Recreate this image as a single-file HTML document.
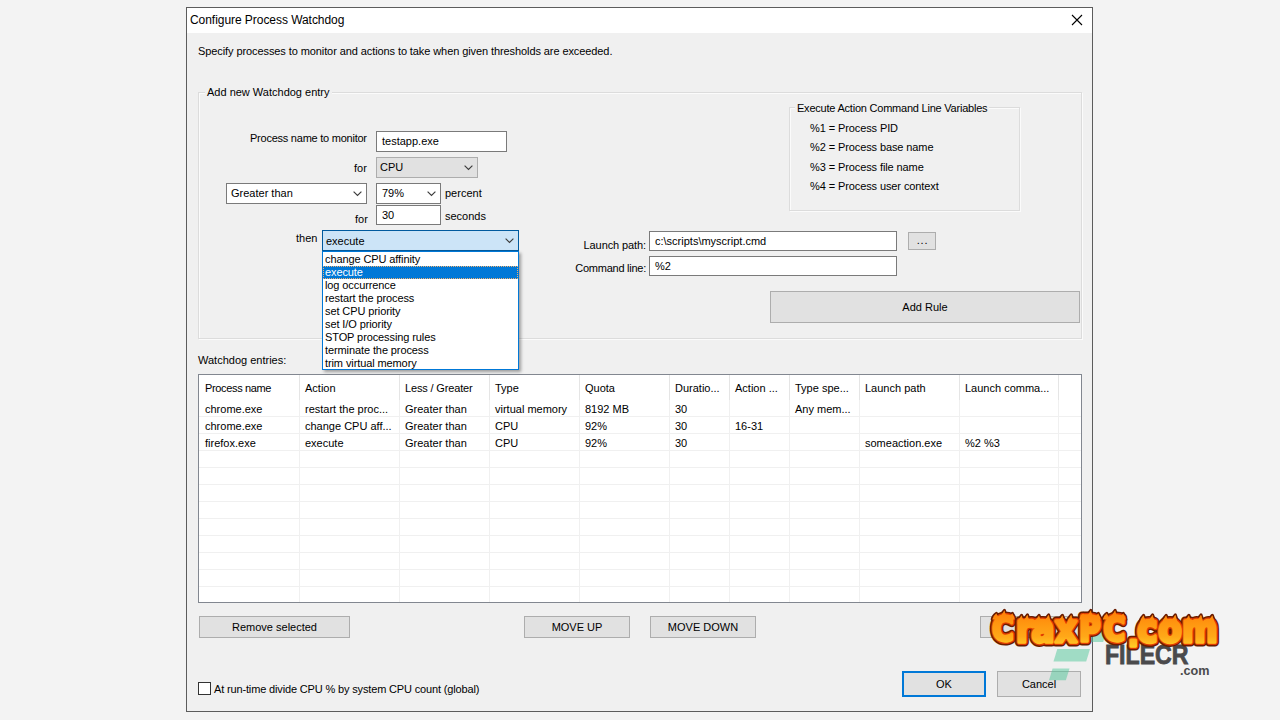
<!DOCTYPE html>
<html>
<head>
<meta charset="utf-8">
<title>Configure Process Watchdog</title>
<style>
*{box-sizing:border-box;margin:0;padding:0}
html,body{width:1280px;height:720px;overflow:hidden;background:#f3f3f3}
body{font-family:"Liberation Sans",sans-serif;font-size:11px;color:#000;position:relative}
.abs{position:absolute}
.t{position:absolute;white-space:nowrap;line-height:14px;height:14px}
#dlg{position:absolute;left:186px;top:7px;width:907px;height:705px;border:1px solid #5c5c5c;background:#f0f0f0}
#title{position:absolute;left:187px;top:8px;width:905px;height:25px;background:#fff}
.grp{position:absolute;border:1px solid #dcdcdc;box-shadow:inset 1px 1px 0 #fbfbfb, 1px 1px 0 #fbfbfb}
.grp>span{position:absolute;background:#f0f0f0;white-space:nowrap;line-height:14px;padding:0 2px}
.inp{position:absolute;background:#fff;border:1px solid #7a7a7a;line-height:18px;padding-left:5px;white-space:nowrap;overflow:hidden}
.cmb{position:absolute;background:#fff;border:1px solid #7a7a7a;line-height:19px;padding-left:4px;white-space:nowrap}
.cmb svg{position:absolute;right:4px;top:7px}
.btn{position:absolute;background:#e1e1e1;border:1px solid #adadad;text-align:center;white-space:nowrap}
#list{position:absolute;left:322px;top:251px;width:197px;height:119px;background:#fff;border:1px solid #0078d7;box-shadow:2px 2px 3px rgba(0,0,0,.35)}
#list{padding-top:1px}
#list div{height:13px;line-height:13px;padding-left:2px;white-space:nowrap;letter-spacing:-.1px}
#list div.sel{background:#0078d7;color:#fff;outline:1px dotted #f0b070;outline-offset:-1px}
#tbl{position:absolute;left:198px;top:374px;width:884px;height:229px;background:#fff;border:1px solid #828790;overflow:hidden}
#tbl .v{position:absolute;top:0;width:1px;height:227px;background:#f0f0f0}
#tbl .vh{position:absolute;top:0;width:1px;height:25px;background:#e5e5e5}
#tbl .h{position:absolute;left:0;width:882px;height:1px;background:#f0f0f0}
#tbl span{position:absolute;white-space:nowrap;line-height:14px;height:14px}
</style>
</head>
<body>
<div id="dlg"></div>
<div id="title"></div>
<div class="t" style="left:190px;top:13px;font-size:12px;letter-spacing:-.05px">Configure Process Watchdog</div>
<svg class="abs" style="left:1071px;top:14px" width="12" height="12" viewBox="0 0 12 12"><path d="M1 1 L11 11 M11 1 L1 11" stroke="#000" stroke-width="1.1" fill="none"/></svg>

<div class="t" style="left:198px;top:44px;letter-spacing:-.09px">Specify processes to monitor and actions to take when given thresholds are exceeded.</div>

<!-- outer group -->
<div class="grp" style="left:198px;top:92px;width:884px;height:247px"><span style="left:6px;top:-8px">Add new Watchdog entry</span></div>
<!-- inner group -->
<div class="grp" style="left:789px;top:107px;width:231px;height:104px"><span style="left:5px;top:-7px;letter-spacing:-.22px">Execute Action Command Line Variables</span></div>
<div class="t" style="left:810px;top:121px;letter-spacing:-.1px">%1 = Process PID</div>
<div class="t" style="left:810px;top:140px;letter-spacing:-.1px">%2 = Process base name</div>
<div class="t" style="left:810px;top:160px;letter-spacing:-.1px">%3 = Process file name</div>
<div class="t" style="left:810px;top:179px;letter-spacing:-.1px">%4 = Process user context</div>

<div class="t" style="left:250px;top:131px;letter-spacing:-.24px">Process name to monitor</div>
<div class="inp" style="left:376px;top:131px;width:131px;height:21px">testapp.exe</div>

<div class="t" style="left:354px;top:161px">for</div>
<div class="cmb" style="left:376px;top:157px;width:102px;height:21px;background:#e1e1e1;border-color:#adadad;line-height:19px;padding-left:3px">CPU<svg width="9" height="6" viewBox="0 0 9 6"><path d="M.6 .6 L4.5 4.5 L8.4 .6" stroke="#3c3c3c" stroke-width="1.15" fill="none"/></svg></div>

<div class="cmb" style="left:226px;top:183px;width:141px;height:21px">Greater than<svg width="9" height="6" viewBox="0 0 9 6"><path d="M.6 .6 L4.5 4.5 L8.4 .6" stroke="#3c3c3c" stroke-width="1.15" fill="none"/></svg></div>
<div class="cmb" style="left:376px;top:183px;width:65px;height:21px;padding-left:5px">79%<svg width="9" height="6" viewBox="0 0 9 6"><path d="M.6 .6 L4.5 4.5 L8.4 .6" stroke="#3c3c3c" stroke-width="1.15" fill="none"/></svg></div>
<div class="t" style="left:445px;top:186px">percent</div>

<div class="t" style="left:355px;top:212px">for</div>
<div class="inp" style="left:376px;top:205px;width:65px;height:20px;line-height:18px">30</div>
<div class="t" style="left:445px;top:209px">seconds</div>

<div class="t" style="left:296px;top:231px">then</div>
<div class="cmb" style="left:322px;top:230px;width:197px;height:21px;background:#cce4f7;border-color:#005a9e;padding-left:3px;line-height:21px">execute<svg width="9" height="6" viewBox="0 0 9 6"><path d="M.6 .6 L4.5 4.5 L8.4 .6" stroke="#3c3c3c" stroke-width="1.15" fill="none"/></svg></div>

<div class="t" style="left:546px;width:100px;text-align:right;top:238px;letter-spacing:-.1px">Launch path:</div>
<div class="inp" style="left:649px;top:231px;width:248px;height:20px;line-height:19px">c:\scripts\myscript.cmd</div>
<div class="btn" style="left:908px;top:232px;width:28px;height:18px;line-height:15px;letter-spacing:.8px;padding-left:1px">...</div>
<div class="t" style="left:546px;width:100px;text-align:right;top:261px;letter-spacing:-.25px">Command line:</div>
<div class="inp" style="left:649px;top:256px;width:248px;height:20px;line-height:19px">%2</div>

<div class="btn" style="left:770px;top:291px;width:310px;height:32px;line-height:30px">Add Rule</div>

<div class="t" style="left:198px;top:353px">Watchdog entries:</div>

<!-- table -->
<div id="tbl">
<div class="h" style="top:41px"></div><div class="h" style="top:58px"></div><div class="h" style="top:75px"></div><div class="h" style="top:92px"></div><div class="h" style="top:109px"></div><div class="h" style="top:126px"></div><div class="h" style="top:143px"></div><div class="h" style="top:160px"></div><div class="h" style="top:177px"></div><div class="h" style="top:194px"></div><div class="h" style="top:211px"></div>
<div class="v" style="left:100px"></div><div class="v" style="left:200px"></div><div class="v" style="left:290px"></div><div class="v" style="left:380px"></div><div class="v" style="left:470px"></div><div class="v" style="left:530px"></div><div class="v" style="left:590px"></div><div class="v" style="left:660px"></div><div class="v" style="left:760px"></div><div class="v" style="left:859px"></div>
<div class="vh" style="left:100px"></div><div class="vh" style="left:200px"></div><div class="vh" style="left:290px"></div><div class="vh" style="left:380px"></div><div class="vh" style="left:470px"></div><div class="vh" style="left:530px"></div><div class="vh" style="left:590px"></div><div class="vh" style="left:660px"></div><div class="vh" style="left:760px"></div><div class="vh" style="left:859px"></div>
<span style="left:6px;top:6px;letter-spacing:-.35px">Process name</span> <span style="left:106px;top:6px">Action</span> <span style="left:206px;top:6px;letter-spacing:-.15px">Less / Greater</span> <span style="left:296px;top:6px">Type</span> <span style="left:386px;top:6px">Quota</span> <span style="left:476px;top:6px">Duratio...</span> <span style="left:536px;top:6px">Action ...</span> <span style="left:596px;top:6px">Type spe...</span> <span style="left:666px;top:6px">Launch path</span> <span style="left:766px;top:6px">Launch comma...</span>
<span style="left:6px;top:27px">chrome.exe</span> <span style="left:106px;top:27px">restart the proc...</span> <span style="left:206px;top:27px">Greater than</span> <span style="left:296px;top:27px">virtual memory</span> <span style="left:386px;top:27px">8192 MB</span> <span style="left:476px;top:27px">30</span> <span style="left:596px;top:27px">Any mem...</span>
<span style="left:6px;top:44px">chrome.exe</span> <span style="left:106px;top:44px">change CPU aff...</span> <span style="left:206px;top:44px">Greater than</span> <span style="left:296px;top:44px">CPU</span> <span style="left:386px;top:44px">92%</span> <span style="left:476px;top:44px">30</span> <span style="left:536px;top:44px">16-31</span>
<span style="left:6px;top:61px">firefox.exe</span> <span style="left:106px;top:61px">execute</span> <span style="left:206px;top:61px">Greater than</span> <span style="left:296px;top:61px">CPU</span> <span style="left:386px;top:61px">92%</span> <span style="left:476px;top:61px">30</span> <span style="left:666px;top:61px">someaction.exe</span> <span style="left:766px;top:61px">%2 %3</span>
</div>

<!-- dropdown list -->
<div id="list">
<div>change CPU affinity</div>
<div class="sel">execute</div>
<div>log occurrence</div>
<div>restart the process</div>
<div>set CPU priority</div>
<div>set I/O priority</div>
<div>STOP processing rules</div>
<div>terminate the process</div>
<div>trim virtual memory</div>
</div>

<!-- bottom buttons -->
<div class="btn" style="left:199px;top:616px;width:151px;height:22px;line-height:20px">Remove selected</div>
<div class="btn" style="left:524px;top:616px;width:106px;height:22px;line-height:20px">MOVE UP</div>
<div class="btn" style="left:650px;top:616px;width:106px;height:22px;line-height:20px">MOVE DOWN</div>
<div class="btn" style="left:980px;top:616px;width:101px;height:22px;line-height:20px"></div>

<div class="abs" style="left:198px;top:682px;width:13px;height:13px;background:#fff;border:1px solid #333"></div>
<div class="t" style="left:214px;top:682px;letter-spacing:-.15px">At run-time divide CPU % by system CPU count (global)</div>

<div class="btn" style="left:902px;top:671px;width:84px;height:26px;line-height:22px;border:2px solid #0078d7">OK</div>
<div class="btn" style="left:997px;top:671px;width:84px;height:26px;line-height:24px">Cancel</div>
<!-- watermark -->
<svg class="abs" style="left:1040px;top:620px" width="80" height="70" viewBox="1040 620 80 70">
<polygon points="1088,631 1106.5,631 1103.2,642 1085,642" fill="#4fc79a" fill-opacity=".5"/>
<polygon points="1057.3,649 1090,649 1086.2,661.5 1053.5,661.5" fill="#4fc79a" fill-opacity=".5"/>
<polygon points="1052.6,668.5 1069.5,668.5 1065.9,680.3 1049,680.3" fill="#4fc79a" fill-opacity=".5"/>
</svg>
<svg class="abs" style="left:1100px;top:636px" width="120" height="46" viewBox="1100 636 120 46" font-family="'Liberation Sans',sans-serif" font-weight="bold">
<text x="1105" y="663.5" font-size="28" fill="#4a4a4c" stroke="#4a4a4c" stroke-width="0.9" textLength="83.5" lengthAdjust="spacingAndGlyphs">FILECR</text>
<text x="1180" y="675" font-size="13" fill="#4a4a4c" textLength="29.5" lengthAdjust="spacingAndGlyphs">.com</text>
</svg>
<svg class="abs" style="left:980px;top:600px" width="250" height="56" viewBox="980 600 250 56">
<defs>
<linearGradient id="fire" x1="0" y1="610" x2="0" y2="648" gradientUnits="userSpaceOnUse">
<stop offset="0" stop-color="#ff7c08"/><stop offset=".35" stop-color="#ff9610"/><stop offset=".7" stop-color="#ffa818"/><stop offset="1" stop-color="#ffd028"/>
</linearGradient>
</defs>
<path d="M992.3,619.5 Q992.8,616.2 996.4,613.5 Q998.3,616.8 998.8,619.5 ZM1000.3,619.5 Q1000.8,614.5 1004.4,610.5 Q1006.3,615.5 1006.8,619.5 ZM1008.3,619.5 Q1008.8,616.2 1012.4,613.5 Q1014.3,616.8 1014.8,619.5 ZM1017.5,623.5 Q1018.0,619.1 1021.6,615.5 Q1023.5,619.9 1024.0,623.5 ZM1023.4,623.5 Q1023.9,618.8 1027.4,615.0 Q1029.4,619.7 1029.9,623.5 ZM1035.0,623.5 Q1035.5,619.1 1039.0,615.5 Q1041.0,619.9 1041.5,623.5 ZM1044.5,623.5 Q1045.0,618.8 1048.6,615.0 Q1050.5,619.7 1051.0,623.5 ZM1058.3,623.5 Q1058.8,619.1 1062.4,615.5 Q1064.3,619.9 1064.8,623.5 ZM1067.2,623.5 Q1067.7,618.8 1071.2,615.0 Q1073.2,619.7 1073.7,623.5 ZM1079.2,619.5 Q1079.8,616.2 1083.3,613.5 Q1085.2,616.8 1085.8,619.5 ZM1086.8,619.5 Q1087.2,614.5 1090.8,610.5 Q1092.8,615.5 1093.2,619.5 ZM1094.2,619.5 Q1094.8,616.2 1098.3,613.5 Q1100.2,616.8 1100.8,619.5 ZM1102.8,619.5 Q1103.3,616.2 1106.8,613.5 Q1108.8,616.8 1109.3,619.5 ZM1111.0,619.5 Q1111.5,614.5 1115.1,610.5 Q1117.0,615.5 1117.5,619.5 ZM1119.3,619.5 Q1119.8,616.2 1123.3,613.5 Q1125.3,616.8 1125.8,619.5 ZM1139.5,623.5 Q1140.0,619.1 1143.5,615.5 Q1145.5,619.9 1146.0,623.5 ZM1148.5,623.5 Q1149.0,618.8 1152.5,615.0 Q1154.5,619.7 1155.0,623.5 ZM1162.1,623.5 Q1162.6,619.1 1166.1,615.5 Q1168.1,619.9 1168.6,623.5 ZM1171.2,623.5 Q1171.7,618.8 1175.3,615.0 Q1177.2,619.7 1177.7,623.5 ZM1184.8,623.5 Q1185.3,619.1 1188.9,615.5 Q1190.8,619.9 1191.3,623.5 ZM1196.9,623.5 Q1197.4,618.8 1201.0,615.0 Q1202.9,619.7 1203.4,623.5 ZM1208.2,623.5 Q1208.7,619.1 1212.3,615.5 Q1214.2,619.9 1214.7,623.5 Z" fill="url(#fire)" stroke="#6a1c00" stroke-width="3.2" stroke-linejoin="round" paint-order="stroke"/>
<text font-family="'DejaVu Sans','Liberation Sans',sans-serif" font-weight="bold" text-anchor="middle" transform="scale(0.88,1)" stroke-linejoin="round" fill="#6a1c00" stroke="#6a1c00" stroke-width="9"><tspan x="1139.8" y="641.5" font-size="33">C</tspan><tspan x="1164.2 1185.2 1211.4" y="642.5" font-size="39">rax</tspan><tspan x="1238.6 1266.5" y="641.5" font-size="33">PC</tspan><tspan x="1287.8" y="646.5" font-size="30">.</tspan><tspan x="1304.0 1329.5 1363.6" y="642.5" font-size="39">com</tspan></text>
<text font-family="'DejaVu Sans','Liberation Sans',sans-serif" font-weight="bold" text-anchor="middle" transform="scale(0.88,1)" stroke-linejoin="round" fill="#e03c00" stroke="#e03c00" stroke-width="6"><tspan x="1139.8" y="641.5" font-size="33">C</tspan><tspan x="1164.2 1185.2 1211.4" y="642.5" font-size="39">rax</tspan><tspan x="1238.6 1266.5" y="641.5" font-size="33">PC</tspan><tspan x="1287.8" y="646.5" font-size="30">.</tspan><tspan x="1304.0 1329.5 1363.6" y="642.5" font-size="39">com</tspan></text>
<text font-family="'DejaVu Sans','Liberation Sans',sans-serif" font-weight="bold" text-anchor="middle" transform="scale(0.88,1)" stroke-linejoin="round" fill="url(#fire)" stroke="url(#fire)" stroke-width="3.4"><tspan x="1139.8" y="641.5" font-size="33">C</tspan><tspan x="1164.2 1185.2 1211.4" y="642.5" font-size="39">rax</tspan><tspan x="1238.6 1266.5" y="641.5" font-size="33">PC</tspan><tspan x="1287.8" y="646.5" font-size="30">.</tspan><tspan x="1304.0 1329.5 1363.6" y="642.5" font-size="39">com</tspan></text>
<path d="M992.3,619.5 Q992.8,616.2 996.4,613.5 Q998.3,616.8 998.8,619.5 ZM1000.3,619.5 Q1000.8,614.5 1004.4,610.5 Q1006.3,615.5 1006.8,619.5 ZM1008.3,619.5 Q1008.8,616.2 1012.4,613.5 Q1014.3,616.8 1014.8,619.5 ZM1017.5,623.5 Q1018.0,619.1 1021.6,615.5 Q1023.5,619.9 1024.0,623.5 ZM1023.4,623.5 Q1023.9,618.8 1027.4,615.0 Q1029.4,619.7 1029.9,623.5 ZM1035.0,623.5 Q1035.5,619.1 1039.0,615.5 Q1041.0,619.9 1041.5,623.5 ZM1044.5,623.5 Q1045.0,618.8 1048.6,615.0 Q1050.5,619.7 1051.0,623.5 ZM1058.3,623.5 Q1058.8,619.1 1062.4,615.5 Q1064.3,619.9 1064.8,623.5 ZM1067.2,623.5 Q1067.7,618.8 1071.2,615.0 Q1073.2,619.7 1073.7,623.5 ZM1079.2,619.5 Q1079.8,616.2 1083.3,613.5 Q1085.2,616.8 1085.8,619.5 ZM1086.8,619.5 Q1087.2,614.5 1090.8,610.5 Q1092.8,615.5 1093.2,619.5 ZM1094.2,619.5 Q1094.8,616.2 1098.3,613.5 Q1100.2,616.8 1100.8,619.5 ZM1102.8,619.5 Q1103.3,616.2 1106.8,613.5 Q1108.8,616.8 1109.3,619.5 ZM1111.0,619.5 Q1111.5,614.5 1115.1,610.5 Q1117.0,615.5 1117.5,619.5 ZM1119.3,619.5 Q1119.8,616.2 1123.3,613.5 Q1125.3,616.8 1125.8,619.5 ZM1139.5,623.5 Q1140.0,619.1 1143.5,615.5 Q1145.5,619.9 1146.0,623.5 ZM1148.5,623.5 Q1149.0,618.8 1152.5,615.0 Q1154.5,619.7 1155.0,623.5 ZM1162.1,623.5 Q1162.6,619.1 1166.1,615.5 Q1168.1,619.9 1168.6,623.5 ZM1171.2,623.5 Q1171.7,618.8 1175.3,615.0 Q1177.2,619.7 1177.7,623.5 ZM1184.8,623.5 Q1185.3,619.1 1188.9,615.5 Q1190.8,619.9 1191.3,623.5 ZM1196.9,623.5 Q1197.4,618.8 1201.0,615.0 Q1202.9,619.7 1203.4,623.5 ZM1208.2,623.5 Q1208.7,619.1 1212.3,615.5 Q1214.2,619.9 1214.7,623.5 Z" fill="url(#fire)"/>
</svg>

</body>
</html>
